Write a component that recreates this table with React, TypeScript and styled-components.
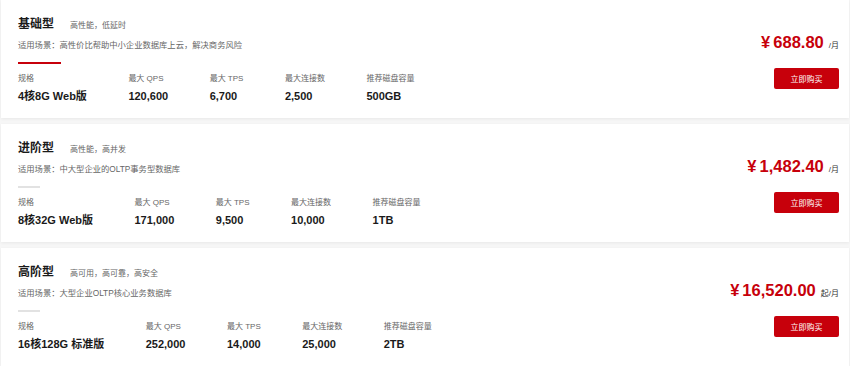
import React from "react";
import styled, { createGlobalStyle } from "styled-components";

const GlobalStyle = createGlobalStyle`
  html, body {
    margin: 0;
    padding: 0;
    background: #f6f6f6;
  }
  body {
    font-family: "Liberation Sans", "Noto Sans CJK SC", sans-serif;
    color: #222;
  }
`;

const List = styled.div`
  display: flex;
  flex-direction: column;
  gap: 6px;
  padding: 0 1px;
`;

const Card = styled.div`
  display: flex;
  justify-content: space-between;
  height: 118px;
  box-sizing: border-box;
  padding: 16px 10px 0 17px;
  background: #fff;
  box-shadow: 0 1px 3px rgba(0, 0, 0, 0.06);
`;

const Info = styled.div`
  display: flex;
  flex-direction: column;
`;

const Head = styled.div`
  display: flex;
  align-items: baseline;
  gap: 16px;
`;

const Title = styled.h3`
  margin: 0;
  font-size: 12px;
  line-height: 16px;
  font-weight: 700;
  color: #1a1a1a;
`;

const Tag = styled.span`
  font-size: 8px;
  line-height: 16px;
  color: #666;
`;

const Desc = styled.p`
  margin: 5px 0 0;
  font-size: 8.3px;
  line-height: 12px;
  color: #666;
`;

const Divider = styled.div<{ $active?: boolean }>`
  margin-top: 11px;
  height: 2px;
  width: ${(p) => (p.$active ? "43px" : "22px")};
  background: ${(p) => (p.$active ? "#c7000b" : "#e2e2e2")};
`;

const Specs = styled.div`
  display: flex;
  gap: 41.5px;
  margin-top: 9px;
`;

const Spec = styled.div`
  display: flex;
  flex-direction: column;
`;

const Label = styled.span`
  font-size: 8px;
  line-height: 12px;
  color: #666;
`;

const Value = styled.span`
  margin-top: 4px;
  font-size: 11px;
  line-height: 14px;
  font-weight: 700;
  color: #1a1a1a;
`;

const Buy = styled.div`
  display: flex;
  flex-direction: column;
  align-items: flex-end;
  padding-top: 16px;
`;

const Price = styled.div`
  display: flex;
  align-items: baseline;
  line-height: 20px;
  color: #c7000b;
  font-weight: 700;
`;

const Yen = styled.span`
  font-size: 16.5px;
  margin-right: 3px;
`;

const Amount = styled.span`
  font-size: 16.5px;
`;

const Unit = styled.span`
  margin-left: 5px;
  font-size: 8px;
  font-weight: 400;
  color: #333;
`;

const Button = styled.button`
  margin-top: 12px;
  width: 65px;
  height: 21px;
  padding: 0;
  border: none;
  border-radius: 2px;
  background: #c7000b;
  color: #fff;
  font-family: inherit;
  font-size: 8px;
  cursor: pointer;
`;

type Plan = {
  name: string;
  tag: string;
  desc: string;
  spec: string;
  qps: string;
  tps: string;
  conn: string;
  disk: string;
  price: string;
  unit: string;
};

const plans: Plan[] = [
  {
    name: "基础型",
    tag: "高性能，低延时",
    desc: "适用场景：高性价比帮助中小企业数据库上云，解决商务风险",
    spec: "4核8G Web版",
    qps: "120,600",
    tps: "6,700",
    conn: "2,500",
    disk: "500GB",
    price: "688.80",
    unit: "/月",
  },
  {
    name: "进阶型",
    tag: "高性能，高并发",
    desc: "适用场景：中大型企业的OLTP事务型数据库",
    spec: "8核32G Web版",
    qps: "171,000",
    tps: "9,500",
    conn: "10,000",
    disk: "1TB",
    price: "1,482.40",
    unit: "/月",
  },
  {
    name: "高阶型",
    tag: "高可用，高可靠，高安全",
    desc: "适用场景：大型企业OLTP核心业务数据库",
    spec: "16核128G 标准版",
    qps: "252,000",
    tps: "14,000",
    conn: "25,000",
    disk: "2TB",
    price: "16,520.00",
    unit: "起/月",
  },
];

export default function App() {
  return (
    <>
      <GlobalStyle />
      <List>
        {plans.map((p, i) => (
          <Card key={p.name}>
            <Info>
              <Head>
                <Title>{p.name}</Title>
                <Tag>{p.tag}</Tag>
              </Head>
              <Desc>{p.desc}</Desc>
              <Divider $active={i === 0} />
              <Specs>
                <Spec>
                  <Label>规格</Label>
                  <Value>{p.spec}</Value>
                </Spec>
                <Spec>
                  <Label>最大 QPS</Label>
                  <Value>{p.qps}</Value>
                </Spec>
                <Spec>
                  <Label>最大 TPS</Label>
                  <Value>{p.tps}</Value>
                </Spec>
                <Spec>
                  <Label>最大连接数</Label>
                  <Value>{p.conn}</Value>
                </Spec>
                <Spec>
                  <Label>推荐磁盘容量</Label>
                  <Value>{p.disk}</Value>
                </Spec>
              </Specs>
            </Info>
            <Buy>
              <Price>
                <Yen>¥</Yen>
                <Amount>{p.price}</Amount>
                <Unit>{p.unit}</Unit>
              </Price>
              <Button>立即购买</Button>
            </Buy>
          </Card>
        ))}
      </List>
    </>
  );
}
